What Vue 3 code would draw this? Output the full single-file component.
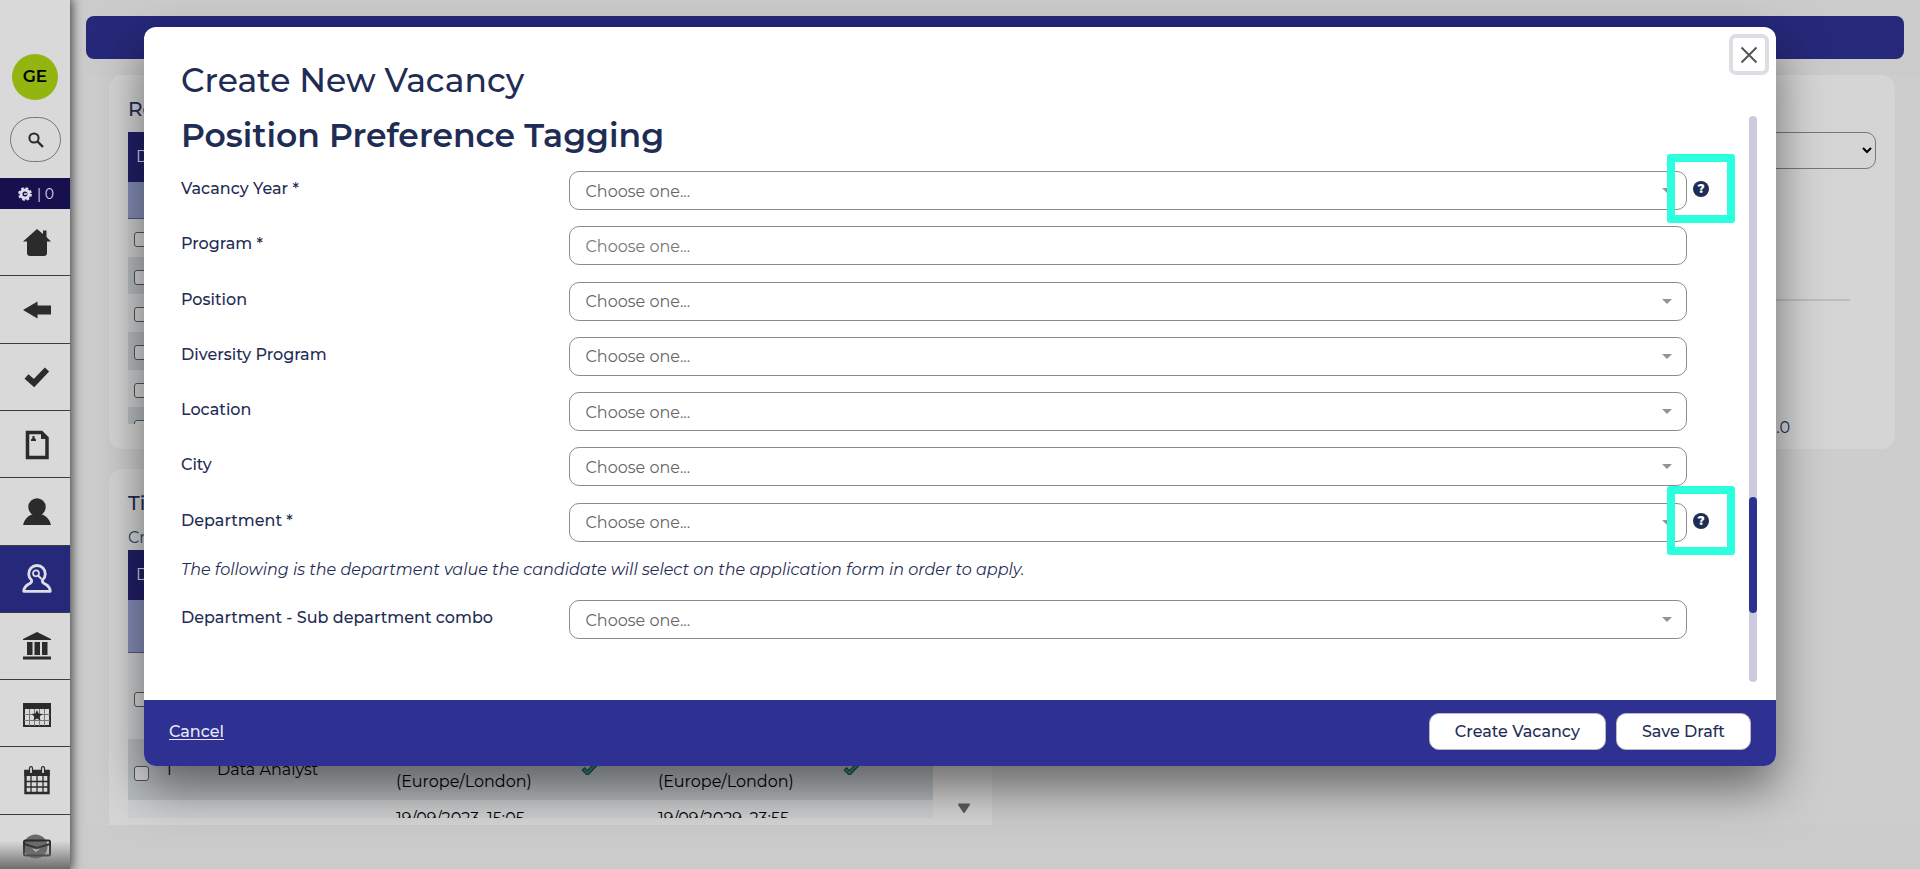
<script setup>
import { ref } from 'vue'

const navItems = [
  { id: 'home', label: 'Home' },
  { id: 'back', label: 'Back' },
  { id: 'tasks', label: 'Tasks' },
  { id: 'document', label: 'Documents' },
  { id: 'person', label: 'People' },
  { id: 'search-person', label: 'Vacancies', active: true },
  { id: 'bank', label: 'Organisation' },
  { id: 'event', label: 'Events' },
  { id: 'calendar', label: 'Calendar' },
  { id: 'mail', label: 'Messages' },
]

const fields = [
  { id: 'year', label: 'Vacancy Year *', help: true },
  { id: 'program', label: 'Program *', text: true },
  { id: 'position', label: 'Position' },
  { id: 'diversity', label: 'Diversity Program' },
  { id: 'location', label: 'Location' },
  { id: 'city', label: 'City' },
  { id: 'department', label: 'Department *', help: true },
]

const program = ref('')
</script>

<template>
  <div class="app">
    <aside class="sidebar">
      <div class="avatar">GE</div>
      <button class="search" aria-label="Search">
        <svg width="18" height="18" viewBox="0 0 18 18"><circle cx="7" cy="7" r="4.6" fill="none" stroke="#2a2a2a" stroke-width="2" /><path d="M10.5 10.5 16 16" stroke="#2a2a2a" stroke-width="2.4" /></svg>
      </button>
      <div class="counter">
        <svg width="14" height="14" viewBox="0 0 14 14"><circle cx="7" cy="7" r="4" fill="none" stroke="#dcdcec" stroke-width="3" /><circle cx="7" cy="7" r="5.8" fill="none" stroke="#dcdcec" stroke-width="2.2" stroke-dasharray="2.6 1.95" /><path d="M6 7h3" stroke="#dcdcec" stroke-width="1.5" /></svg>
        <span>| 0</span>
      </div>
      <nav class="nav">
        <a v-for="item in navItems" :key="item.id" href="#" class="nav-item" :class="{ active: item.active }" :aria-label="item.label">
          <svg width="30" height="30" viewBox="0 0 30 30">
            <g v-if="item.id === 'home'" fill="#2b2b2b"><path d="M15 1 1 13.5h4V25q0 3 3 3h14q3 0 3-3V13.5h4L24.5 9V2.500h-3.500v3.500z" /></g>
            <path v-else-if="item.id === 'back'" d="M1 15 15.500 6.500V10.500H29V19.500H15.500V23.500z" fill="#2b2b2b" />
            <path v-else-if="item.id === 'tasks'" d="M4.500 14.500 12 21 25 7.500" fill="none" stroke="#2b2b2b" stroke-width="6" />
            <g v-else-if="item.id === 'document'"><path d="M5.500 2.500H19.500L25 8V27.500H5.500z" fill="none" stroke="#2b2b2b" stroke-width="3.500" /><path d="M19 1v8h7z" fill="#2b2b2b" /><path d="M9 11v-1.500l1.500-1.500V6h2v2l1.500 1.500V11z" fill="#2b2b2b" /></g>
            <g v-else-if="item.id === 'person'" fill="#2b2b2b"><circle cx="15" cy="10" r="8.700" /><path d="M1 28q1.500-8 10-11h8q8.500 3 10 11z" /></g>
            <g v-else-if="item.id === 'search-person'" fill="none" stroke="#dedee8" stroke-width="2.800" stroke-linejoin="round"><path d="M9.500 16A8.300 8.300 0 1 1 20.500 16Q19.500 18.500 24 20.500 28 23 28.300 27.300H1.700Q2 23 6 20.500 10.500 18.500 9.500 16z" /><circle cx="14" cy="9.300" r="3" stroke-width="1.700" /><path d="m16 11.500 3.500 3.500" stroke-width="2" /></g>
            <g v-else-if="item.id === 'bank'" fill="#2b2b2b"><path d="M15 1 29 8v1H1V8z" /><path d="M5 11h5.500v13H5zM12.500 11h5.500v13h-5.500zM20 11h5.500v13H20zM1 25.500h28v3H1z" /></g>
            <g v-else-if="item.id === 'event'"><path d="M2 5h26v22H2z" fill="none" stroke="#2b2b2b" stroke-width="2" /><path d="M1 4h28v6H1z" fill="#2b2b2b" /><path d="M7.500 10v17M22.500 10v17M2 15.500h26M2 21.500h26M12.500 10v17M17.500 10v17" stroke="#777" stroke-width="1" /><path d="m15 11 1.600 3.600 3.900.4-2.900 2.600.8 3.900-3.400-2-3.400 2 .8-3.900-2.900-2.600 3.900-.4z" fill="#2b2b2b" /></g>
            <g v-else-if="item.id === 'calendar'"><path d="M3.500 5h23v22h-23z" fill="none" stroke="#2b2b2b" stroke-width="2.400" /><path d="M2.300 4h25.400v6H2.300z" fill="#2b2b2b" /><path d="M9 10v17M15 10v17M21 10v17M3 15.500h24M3 21h24" stroke="#2b2b2b" stroke-width="1.300" /><rect x="7.500" y="0.700" width="3" height="7" rx="1.500" fill="#d9d9d9" stroke="#2b2b2b" stroke-width="1.200" /><rect x="19.500" y="0.700" width="3" height="7" rx="1.500" fill="#d9d9d9" stroke="#2b2b2b" stroke-width="1.200" /></g>
            <g v-else><circle cx="13.500" cy="13.500" r="12" fill="#6a6a6a" /><rect x="2" y="7.500" width="26" height="15" rx="1.500" fill="none" stroke="#2b2b2b" stroke-width="2" /><path d="m2 11 13 4 13-4" fill="none" stroke="#2b2b2b" stroke-width="2" /><path d="m10 15.500 4 3.500 4-3.500-4 1z" fill="#ddd" /></g>
          </svg>
        </a>
      </nav>
      <div class="fade"></div>
    </aside>

    <main class="main">
      <div class="banner"></div>
      <div class="board">
        <section class="panel recent">
          <h2>Re</h2>
          <table class="grid">
            <thead>
              <tr class="head"><th>D</th></tr>
              <tr class="filter"><td></td></tr>
            </thead>
            <tbody>
              <tr v-for="n in 6" :key="n"><td><input type="checkbox" :aria-label="'Select row ' + n" /></td></tr>
            </tbody>
          </table>
        </section>

        <section class="panel chart">
          <select aria-label="Chart"><option></option></select>
          <hr />
          <span class="tick">.0</span>
        </section>

        <section class="panel timeline">
          <h2>Ti</h2>
          <p>Cr</p>
          <div class="scroller">
            <table class="grid wide">
              <colgroup><col class="c1" /><col class="c2" /><col class="c3" /><col class="c4" /><col class="c5" /><col class="c4" /><col class="c6" /></colgroup>
              <thead>
                <tr class="head"><th>D</th><th colspan="6"></th></tr>
                <tr class="filter"><td colspan="7"></td></tr>
              </thead>
              <tbody>
                <tr class="tall"><td><input type="checkbox" aria-label="Select vacancy" /></td><td colspan="6"></td></tr>
                <tr>
                  <td><input type="checkbox" aria-label="Select Data Analyst" /></td>
                  <td>1</td>
                  <td>Data Analyst</td>
                  <td><br />(Europe/London)</td>
                  <td><svg class="tick-icon" width="18" height="14" viewBox="0 0 18 14"><path d="M2 7.500 6.500 12 16 2" fill="none" stroke="#17504d" stroke-width="4.500" /><path d="M2.700 8.200 6.500 12 15.500 2.600" fill="none" stroke="#3f8f89" stroke-width="2.200" /></svg></td>
                  <td><br />(Europe/London)</td>
                  <td><svg class="tick-icon" width="18" height="14" viewBox="0 0 18 14"><path d="M2 7.500 6.500 12 16 2" fill="none" stroke="#17504d" stroke-width="4.500" /><path d="M2.700 8.200 6.500 12 15.500 2.600" fill="none" stroke="#3f8f89" stroke-width="2.200" /></svg></td>
                </tr>
                <tr><td></td><td></td><td></td><td>19/09/2023, 15:05<br />&nbsp;</td><td></td><td>19/09/2029, 23:55<br />&nbsp;</td><td></td></tr>
              </tbody>
            </table>
            <svg class="down" width="14" height="11" viewBox="0 0 14 11"><path d="M2 1.500h10L7 9z" fill="#5c5c5c" stroke="#5c5c5c" stroke-width="2" stroke-linejoin="round" /></svg>
          </div>
        </section>
      </div>
    </main>

    <div class="modal" role="dialog" aria-label="Create New Vacancy">
      <button class="close" aria-label="Close">
        <svg width="18" height="18" viewBox="0 0 18 18"><path d="m1.500 1.500 15 15m0-15-15 15" stroke="#555" stroke-width="2" /></svg>
      </button>
      <header class="modal-head"><h1>Create New Vacancy</h1></header>
      <div class="modal-body">
        <form class="form">
          <h2>Position Preference Tagging</h2>
          <div class="fields">
            <div v-for="f in fields" :key="f.id" class="row">
              <label :for="f.id">{{ f.label }}</label>
              <input v-if="f.text" :id="f.id" v-model="program" type="text" placeholder="Choose one..." />
              <div v-else class="picker">
                <select :id="f.id"><option>Choose one...</option></select>
                <svg width="10" height="5" viewBox="0 0 10 5"><path d="M0 0h10L5 5z" fill="#949494" /></svg>
              </div>
              <button v-if="f.help" type="button" class="help" aria-label="Help">?</button>
              <div v-if="f.help" class="highlight"></div>
            </div>
          </div>
          <p class="note">The following is the department value the candidate will select on the application form in order to apply.</p>
          <div class="row">
            <label for="combo">Department - Sub department combo</label>
            <div class="picker">
              <select id="combo"><option>Choose one...</option></select>
              <svg width="10" height="5" viewBox="0 0 10 5"><path d="M0 0h10L5 5z" fill="#949494" /></svg>
            </div>
          </div>
        </form>
        <div class="track"><div class="before"></div><div class="thumb"></div><div class="after"></div></div>
      </div>
      <footer class="modal-foot">
        <a href="#">Cancel</a>
        <button>Create Vacancy</button>
        <button>Save Draft</button>
      </footer>
    </div>
  </div>
</template>

<style>
body { margin: 0; }
</style>

<style scoped>
* { box-sizing: border-box; }
.app {
  position: relative;
  display: flex;
  height: 100vh;
  overflow: hidden;
  background: #cbcbcb;
  color: #1f2d55;
  font: 16px/24px Montserrat, Inter, sans-serif;
}
h1, h2, p { margin: 0; }
button, input, select { font: inherit; color: inherit; }

.sidebar {
  position: relative;
  z-index: 1;
  flex: none;
  display: flex;
  flex-direction: column;
  align-items: center;
  width: 70px;
  overflow: hidden;
  background: #d9d9d9;
}
.app::before {
  content: "";
  position: absolute;
  inset: 0 auto 0 0;
  width: 70px;
  box-shadow: 0 0 10px 2px #444;
}
.avatar {
  flex: none;
  width: 46px;
  height: 46px;
  margin-top: 54px;
  border-radius: 50%;
  background: #92b510;
  color: #000;
  font-size: 17px;
  font-weight: 600;
  line-height: 45px;
  text-align: center;
}
.search {
  flex: none;
  display: grid;
  place-items: center;
  width: 51px;
  height: 45px;
  margin: 17px 0 16px;
  padding: 0 0 0 2px;
  border: 1px solid #777;
  border-radius: 23px;
  background: none;
}
.counter {
  flex: none;
  display: flex;
  align-items: center;
  justify-content: center;
  gap: 5px;
  width: 100%;
  height: 31px;
  padding-left: 2px;
  background: #17104f;
  color: #dcdcec;
  font-size: 14px;
}
.nav { flex: none; display: grid; grid-auto-rows: 1fr; width: 100%; height: 673px; }
.nav-item { display: grid; place-items: center; padding: 1px 0 0 3px; border-bottom: 1px solid #3c3c3c; }
.nav-item.active { background: #262879; }
.fade {
  position: absolute;
  inset: auto 0 0 0;
  height: 28px;
  background: linear-gradient(transparent, #6d6d6d);
}

.main { flex: 1; display: flex; flex-direction: column; min-width: 0; padding: 16px 0 0 16px; }
.banner { flex: none; height: 43px; margin-right: 16px; border-radius: 8px; background: #262879; }
.board {
  display: grid;
  grid-template-columns: 883fr 885fr;
  gap: 20px 18px;
  align-items: start;
  margin-top: 16px;
  padding: 0 25px 0 23px;
  background: #cdcdcd;
}
.panel { overflow: hidden; border-radius: 14px; background: #d5d5d5; }
.panel h2 { font-size: 20px; font-weight: 500; line-height: 26px; }
.recent { height: 374px; padding: 21px 19px 25px; }
.recent h2 { margin-bottom: 10px; }
.recent .grid { display: block; height: 292px; overflow: hidden; }
.recent .grid thead { display: block; }
.recent .grid tbody { display: grid; grid-auto-rows: 1fr; height: 226px; }
.recent .grid tr, .recent .grid td { display: block; height: auto; }
.recent .grid td { padding-top: 11px; }
.recent .grid .head { height: 50px; }
.recent .grid .filter { height: 37px; }
.recent .grid th { display: block; line-height: 50px; }
.chart { display: flex; flex-direction: column; align-items: flex-end; height: 374px; padding: 57px 19px 0 0; }
.chart select { width: 90%; height: 37px; padding-right: 2px; border: 1px solid #777; border-radius: 10px; background: none; color: #000; }
.chart hr { width: 90%; height: 2px; margin: 130px 26px 0 0; border: 0; background: #bdbdbd; }
.tick { margin: 115px 86px 0 0; }
.timeline { height: 356px; padding: 21px 19px 7px; border-radius: 14px 14px 0 0; }
.timeline p { margin: 10px 0 1px; color: #24466f; line-height: 23px; }
.scroller { display: flex; height: 268px; overflow: hidden; }
.down { flex: none; align-self: flex-end; margin: 0 2px 4px 24px; }

.grid { border-collapse: collapse; color: #000; }
.grid th, .grid td { padding: 0; text-align: left; font-weight: 400; }
.grid .head { height: 50px; background: #211f68; color: #d9d9e8; }
.grid .head th:first-child { padding-left: 8px; }
.grid .filter { background: #858eb8; border-bottom: 1px solid #555b78; }
.grid tbody tr:nth-child(even) { background: #b9bec1; }
.grid tbody tr { height: 61px; background: #cdcfd0; }
.grid tbody .tall { height: 87px; }
.grid input {
  display: block;
  width: 15px;
  height: 15px;
  margin: 2px 0 0 6px;
  appearance: none;
  border: 1px solid #555;
  border-radius: 3px;
  background: #d9d9d9;
}
.wide { flex: 1; table-layout: fixed; }
.wide .filter { height: 52px; }
.wide input { margin-top: 8px; }
.wide td { white-space: nowrap; }
.tick-icon { display: block; margin: -4px 0 0 13px; }
.c1 { width: 38px; }
.c2 { width: 51px; }
.c3 { width: 179px; }
.c4 { width: 172px; }
.c5 { width: 90px; }

.modal {
  position: absolute;
  z-index: 2;
  inset: 27px 144px auto;
  display: flex;
  flex-direction: column;
  height: 85%;
  border-radius: 12px;
  background: #fff;
  box-shadow: 0 22px 48px rgba(0, 0, 0, 0.5);
}
.close {
  position: absolute;
  top: 7px;
  right: 7px;
  display: grid;
  place-items: center;
  width: 40px;
  height: 41px;
  padding: 0;
  border: 4px solid #dbdfe4;
  border-radius: 7px;
  background: #fff;
}
.modal-head { flex: none; height: 89px; padding: 33px 37px 0; }
h1 { font-size: 33px; font-weight: 500; line-height: 40px; }
.modal-body { flex: 1; display: flex; min-height: 0; padding: 0 19px 18px 37px; }
.form { flex: 1; margin-right: 18px; }
.form h2 { margin-bottom: 16px; font-size: 33px; font-weight: 600; line-height: 39px; }
.fields { display: grid; grid-auto-rows: 1fr; height: 387px; }
.row { position: relative; display: grid; grid-template-columns: 25% 1fr 44px; align-items: start; font-weight: 500; }
.row label { padding-top: 6px; }
.row input, .row select {
  width: 100%;
  height: 39px;
  padding: 2px 16px 0;
  appearance: none;
  border: 1px solid #8c8c8c;
  border-radius: 10px;
  background: #fff;
  color: #666;
  font-weight: 400;
}
.row input::placeholder { color: #777; }
.picker { position: relative; }
.picker svg { position: absolute; right: 15px; top: 17px; }
.help {
  width: 16px;
  height: 16px;
  margin: 10px 0 0 6px;
  padding: 0;
  border: 0;
  border-radius: 50%;
  background: #1f2d55;
  color: #fff;
  font-size: 12px;
  font-weight: 800;
  line-height: 16px;
}
.highlight {
  position: absolute;
  top: -17px;
  right: -4px;
  width: 68px;
  height: 69px;
  border: 8px solid #2bffde;
  border-radius: 3px;
}
.note { margin: 0 0 18px; font-style: italic; }
.track { display: flex; flex-direction: column; flex: none; width: 8px; border-radius: 4px; background: #cdcae0; }
.before { flex: 381; }
.thumb { flex: 116; border-radius: 4px; background: #2e3092; }
.after { flex: 69; }
.modal-foot {
  flex: none;
  display: flex;
  align-items: flex-start;
  gap: 10px;
  height: 66px;
  padding: 13px 25px 0;
  border-radius: 0 0 12px 12px;
  background: #2e3092;
}
.modal-foot a { margin: 7px auto 0 0; color: #e8e8f6; font-weight: 500; text-underline-offset: 2px; }
.modal-foot button {
  height: 37px;
  padding: 2px 25px 0;
  border: 1px solid #b9b9c4;
  border-radius: 10px;
  background: #fff;
  font-weight: 500;
}
</style>
